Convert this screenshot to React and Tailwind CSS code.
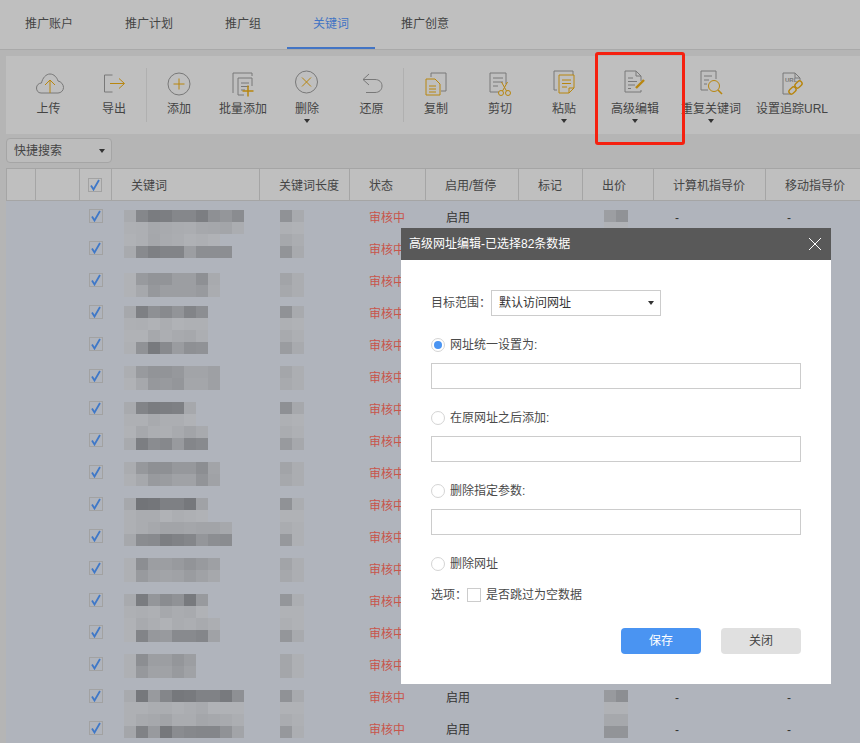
import { useState } from 'react';

const GOLD = '#b8860f';
const GRAY = '#787878';

const tabs = ['推广账户', '推广计划', '推广组', '关键词', '推广创意'];

const Icon = ({ children }) => (
  <svg width="40" height="30" viewBox="0 0 40 30" fill="none" stroke={GRAY} strokeWidth="1">
    {children}
  </svg>
);

const tools = [
  {
    label: '上传', w: 65,
    icon: (
      <>
        <path d="M12 25C9 25 7.5 22.5 7.5 20C7.5 17 10 15 12.5 15C13.5 10 17 6 21 6C25 6 28 9.5 29 13C32 13.5 34.5 16.5 34.5 19.5C34.5 22.5 32 25 29 25Z" />
        <path d="M21 25V12M16 17L21 12L26 17" stroke={GOLD} />
      </>
    ),
  },
  {
    label: '导出', w: 66, sep: true,
    icon: (
      <>
        <path d="M18.5 7H10.5V24H18.5" />
        <path d="M16 15.5H30M25 10.5L30.5 15.5L25 20.5" stroke={GOLD} />
      </>
    ),
  },
  {
    label: '添加', w: 64,
    icon: (
      <>
        <circle cx="20" cy="16" r="11" />
        <path d="M14.5 16H25.5M20 10.5V21.5" stroke={GOLD} />
      </>
    ),
  },
  {
    label: '批量添加', w: 64,
    icon: (
      <>
        <path d="M10 25V5H29V8" />
        <path d="M21 27H15V10H29V18" />
        <path d="M18 15H26M18 18.5H26M18 22H22" />
        <path d="M19.5 23H30.5M25 17.5V28.5" stroke={GOLD} strokeWidth="1.5" />
      </>
    ),
  },
  {
    label: '删除', w: 64, arrow: true,
    icon: (
      <>
        <circle cx="19.5" cy="14" r="11" />
        <path d="M15 9.5L24 18.5M24 9.5L15 18.5" stroke={GOLD} />
      </>
    ),
  },
  {
    label: '还原', w: 65, sep: true,
    icon: <path d="M17 6L11 11.5L17 17M11 11.5H23C27 11.5 30 14 30 18C30 22 27 24.5 23 24.5H14" />,
  },
  {
    label: '复制', w: 64,
    icon: (
      <>
        <path d="M15 9V5H30V23H25" />
        <path d="M10 11H19L24 16V27H10Z" stroke={GOLD} />
        <path d="M13 18H20M13 21H20M13 24H20" stroke={GOLD} />
      </>
    ),
  },
  {
    label: '剪切', w: 64,
    icon: (
      <>
        <path d="M19 24H10V5H26V16" />
        <path d="M13 10H23M13 14H23M13 18H18" />
        <circle cx="21" cy="25" r="2.5" stroke={GOLD} />
        <circle cx="28" cy="25" r="2.5" stroke={GOLD} />
        <path d="M22.5 23L27.5 14M26.5 23L21.5 14" stroke={GOLD} />
      </>
    ),
  },
  {
    label: '粘贴', w: 64, arrow: true,
    icon: (
      <>
        <path d="M13 22H10V3H29V7" />
        <path d="M15 7H30V20L25 25H15ZM30 20H25V25" stroke={GOLD} />
        <path d="M18 12H27M18 15.5H27M18 19H23" stroke={GOLD} />
      </>
    ),
  },
  {
    label: '高级编辑', w: 78, arrow: true,
    icon: (
      <>
        <path d="M26 13V8L21 3H10V24H26V22M21 3V8H26" />
        <path d="M13 10H18M13 13.5H22M13 17H20M13 20.5H16" />
        <path d="M21 20L29 12" stroke={GOLD} strokeWidth="2.4" />
      </>
    ),
  },
  {
    label: '重复关键词', w: 74, arrow: true,
    icon: (
      <>
        <path d="M25 11V3H10V22H17" />
        <path d="M13 8H21M13 12H18M13 16H16" />
        <circle cx="23" cy="18" r="5.5" stroke={GOLD} />
        <path d="M27 22L31 26" stroke={GOLD} strokeWidth="1.6" />
      </>
    ),
  },
  {
    label: '设置追踪URL', w: 88,
    icon: (
      <>
        <path d="M19 26H11V5H23L28 10V12M23 5V10H28" />
        <text x="13" y="14" fontSize="6" fontWeight="700" fill={GRAY} stroke="none" fontFamily="Liberation Sans">URL</text>
        <rect x="22.5" y="14" width="8" height="5" rx="2.5" transform="rotate(-45 26.5 16.5)" stroke={GOLD} strokeWidth="1.4" />
        <rect x="16.5" y="20" width="8" height="5" rx="2.5" transform="rotate(-45 20.5 22.5)" stroke={GOLD} strokeWidth="1.4" />
      </>
    ),
  },
];

const columns = [
  { w: 30, label: '' },
  { w: 44, label: '' },
  { w: 32, label: '' },
  { w: 148, label: '关键词' },
  { w: 90, label: '关键词长度' },
  { w: 76, label: '状态' },
  { w: 93, label: '启用/暂停' },
  { w: 64, label: '标记' },
  { w: 71, label: '出价' },
  { w: 112, label: '计算机指导价' },
  { w: 94, label: '移动指导价' },
];

// blurred-out cells: [offset from row top, keyword lines, length lines, bid lines]
const rows = [
  [9, ['a8 85 7a 7c 85 85 7c 8e 94 8a', 'ae ad a6 a8 aa ab a6 a5 a3 ab'], ['90 a8', 'ae b0'], ['9c 90', 'b0 b0']],
  [1, ['b0 ad a5 a9 ab af ad b0', 'a8 88 7e 82 82 9c 8c 8c 8c'], ['a6 ab', '92 a8']],
  [8, ['b0 98 92 92 9c 9c 8e a8', 'b0 a6 96 9c 9c 9c 98 aa'], ['a2 ab', 'a6 ab']],
  [9, ['a6 7e 8e 88 92 82 8c', 'ae ad b0 ab b0 ae ae'], ['90 a8', 'ae b0']],
  [1, ['b0 b0 a6 ac a8 a6 ac', 'ae 90 78 88 9a 8e 90'], ['a8 ad', '9a a8']],
  [5, ['ac 98 92 92 96 a2 a2 9e', 'b0 a6 96 98 94 a4 a4 9e'], ['a4 ac', 'a8 ac']],
  [9, ['a8 82 7a 7c 7e a6', 'ae ae a8 ac ac b0'], ['8e a6', 'ae b0']],
  [1, ['b0 a6 ac ad a8 a2 a8', 'a8 7c 8a 86 98 84 88'], ['aa ae', '98 a6']],
  [5, ['aa 96 8e 8e 96 96 8c a2', 'ae a6 98 9a a0 a0 92 a0'], ['a2 ab', 'a6 ab']],
  [9, ['a6 72 74 7e 7e 76 a0', 'ae aa aa b0 ac ae b0'], ['90 ab', 'b0 b0']],
  [1, ['ae aa a6 a2 a2 a4 a2 a2 a6', 'a6 8a 88 7c 80 84 94 8c 8a'], ['aa ae', '96 ae']],
  [5, ['ae 8c 9c 9c 98 92 98 9e', 'ae 98 a0 a2 a0 9a a0 a6'], ['a2 ac', 'a6 ac']],
  [9, ['a8 7a 94 8a 90 78 98', 'ae ac ae a6 aa a8 b0'], ['94 ac', 'b0 b0']],
  [1, ['b0 a8 ac b0 aa ac a8 ac', 'b0 82 96 98 88 88 84 a0'], ['ad b0', '94 a8']],
  [5, ['ae 8c 9c 9c 94 9c', 'ae 96 a0 a0 98 a0'], ['a4 ae', 'a4 ae']],
  [9, ['a8 76 98 84 76 78 80 80 78 8e', 'ae ae ab ab ae ab a8 b0 b0 b0'], ['90 a8', 'b0 b0'], ['98 8c', 'b0 b0']],
  [1, ['ae a8 a6 a2 aa aa a4 a6 a8 ac', 'a4 80 98 76 8a 86 84 84 90 a2'], ['aa ae', '96 ac'], ['a6 a6', '92 92']],
];

const shade = (hex) => {
  const v = parseInt(hex, 16);
  return `rgb(${v}, ${v + 2}, ${v + 6})`;
};

function Mosaic({ lines, top, left }) {
  return (
    <div className="flex flex-col" style={{ marginTop: top, marginLeft: left }}>
      {lines.map((line, i) => (
        <div key={i} className="flex h-3">
          {line.split(' ').map((c, j) => (
            <div key={j} className="w-3 h-3" style={{ backgroundColor: shade(c) }} />
          ))}
        </div>
      ))}
    </div>
  );
}

const Check = ({ className = '' }) => (
  <div className={`w-[14px] h-[14px] border border-[#a2a2a2] flex items-center justify-center ${className}`}>
    <svg width="12" height="12" viewBox="0 0 12 12" fill="none">
      <path d="M2 6.5L4.5 10.5L10 1" stroke="#3f78c8" strokeWidth="1.8" />
    </svg>
  </div>
);

const Caret = ({ className = '' }) => (
  <div className={`w-0 h-0 border-x-[3px] border-x-transparent border-t-[4px] border-t-[#333] ${className}`} />
);

function Radio({ on, label }) {
  return (
    <div className="flex items-center h-4 mt-[21px]">
      <div className="w-[14px] h-[14px] rounded-full border border-[#d4d4d4] flex items-center justify-center">
        {on && <div className="w-2 h-2 rounded-full bg-[#4a94f2]" />}
      </div>
      <span className="ml-[5px]">{label}</span>
    </div>
  );
}

const UrlInput = () => <input className="block w-[370px] h-[26px] mt-[10px] border border-[#cccccc] bg-white" />;

function Dialog() {
  return (
    <div className="absolute left-[401px] top-[228px] w-[430px] h-[456px] bg-white text-[#4a4a4a]">
      <div className="h-8 bg-[#595959] flex items-center justify-between pl-2 pr-[10px] text-white">
        <span>高级网址编辑-已选择82条数据</span>
        <svg width="12" height="12" viewBox="0 0 12 12" stroke="#ffffff" strokeWidth="1">
          <path d="M0 0L12 12M12 0L0 12" />
        </svg>
      </div>
      <div className="px-[30px] pt-[30px]">
        <div className="flex items-center">
          <span className="w-[60px]">目标范围：</span>
          <div className="w-[170px] h-[26px] border border-[#cccccc] flex items-center justify-between pl-[7px] pr-[6px] text-[#333]">
            <span>默认访问网址</span>
            <Caret />
          </div>
        </div>
        <Radio on label="网址统一设置为:" />
        <UrlInput />
        <Radio label="在原网址之后添加:" />
        <UrlInput />
        <Radio label="删除指定参数:" />
        <UrlInput />
        <Radio label="删除网址" />
        <div className="flex items-center h-[18px] mt-[14px]">
          <span className="w-9">选项：</span>
          <div className="w-[14px] h-[14px] border border-[#cccccc]" />
          <span className="ml-[5px]">是否跳过为空数据</span>
        </div>
        <div className="flex justify-end gap-5 mt-6">
          <button className="w-20 h-[26px] rounded-sm bg-[#4a94f2] text-white">保存</button>
          <button className="w-20 h-[26px] rounded-sm bg-[#e0e0e0] text-[#444]">关闭</button>
        </div>
      </div>
    </div>
  );
}

export default function App() {
  const [active] = useState(3);

  return (
    <div className="relative w-[860px] h-[743px] overflow-hidden bg-[#b5b5b5] text-xs text-[#444] font-['Liberation_Sans','Noto_Sans_CJK_SC',sans-serif]">
      {/* Tabs */}
      <div className="h-[50px] bg-[#bfbfbf] border-b border-[#a9a9a9]">
        <nav className="flex -ml-px">
          {tabs.map((t, i) => (
            <div
              key={t}
              className={`h-[49px] px-[26px] pt-px flex items-center border-b-2 ${i === active ? 'border-[#4274c4] text-[#4274c4]' : 'border-transparent'}`}
            >
              {t}
            </div>
          ))}
        </nav>
      </div>

      {/* Toolbar */}
      <div className="ml-[6px] mt-[6px] h-[78px] bg-[#bfbfbf] flex pl-[10px]">
        {tools.map((tool) => (
          <div
            key={tool.label}
            className={`relative flex flex-col items-center pt-3 whitespace-nowrap ${tool.sep ? 'after:absolute after:right-0 after:top-3 after:h-[54px] after:w-px after:bg-[#b0b0b0]' : ''}`}
            style={{ width: tool.w }}
          >
            <Icon>{tool.icon}</Icon>
            <span className="leading-4 mt-[3px]">{tool.label}</span>
            {tool.arrow && <Caret className="mt-[2px]" />}
          </div>
        ))}
      </div>

      {/* Quick search */}
      <div className="ml-[6px] mt-1 w-[106px] h-[25px] rounded-sm border border-[#a5a5a5] bg-[#bcbcbc] flex items-center justify-between pl-[7px] pr-[6px]">
        <span>快捷搜索</span>
        <Caret />
      </div>

      {/* Table */}
      <div className="ml-[6px] mt-[5px]">
        <div className="flex h-[33px] bg-[#bfbfbf] border-y border-[#a5a5a5]">
          {columns.map((c, i) => (
            <div
              key={i}
              className={`shrink-0 flex items-center pl-[19px] pt-[2px] whitespace-nowrap border-[#a5a5a5] ${i < 10 ? 'border-r' : ''} ${i === 0 ? 'border-l' : ''}`}
              style={{ width: c.w }}
            >
              {i === 2 && <Check className="-ml-[11px] -mt-[2px] shrink-0" />}
              {c.label}
            </div>
          ))}
        </div>
        <div className="bg-[#b0b4bc]">
          {rows.map(([off, kw, len, bid], i) => (
            <div key={i} className="flex h-8">
              <div className="w-[73px] shrink-0" />
              <div className="w-8 shrink-0 flex items-center">
                <Check className="ml-[10px] -mt-[2px]" />
              </div>
              <div className="w-[148px] shrink-0">
                <Mosaic lines={kw} top={off} left={13} />
              </div>
              <div className="w-[90px] shrink-0">
                <Mosaic lines={len} top={off} left={21} />
              </div>
              <div className="w-[76px] shrink-0 flex items-center pl-5 pt-[2px] text-[#c8554b]">审核中</div>
              {/* rows behind the dialog show nothing past the status column */}
              {bid && (
                <>
                  <div className="w-[93px] shrink-0 flex items-center pl-[21px] pt-[2px] text-[#333]">启用</div>
                  <div className="w-[64px] shrink-0" />
                  <div className="w-[71px] shrink-0">
                    <Mosaic lines={bid} top={off} left={22} />
                  </div>
                  <div className="w-[112px] shrink-0 flex items-center pl-[22px] pt-[2px] text-[#333]">-</div>
                  <div className="flex-1 flex items-center pl-[22px] pt-[2px] text-[#333]">-</div>
                </>
              )}
            </div>
          ))}
        </div>
      </div>

      <Dialog />

      {/* Red highlight on the advanced edit button */}
      <div className="absolute left-[595px] top-[52px] w-[90px] h-[93px] border-[3px] border-[#f5200f] rounded-[3px]" />
    </div>
  );
}
